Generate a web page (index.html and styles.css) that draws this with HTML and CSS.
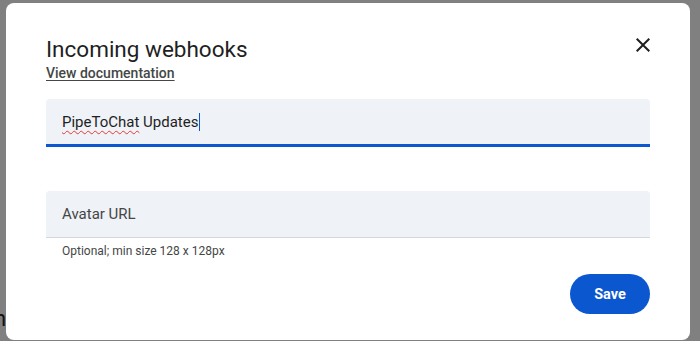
FILE: index.html
```html
<!DOCTYPE html>
<html lang="en">
<head>
	<meta charset="utf-8" />
	<title>Incoming webhooks</title>
	<link rel="stylesheet" href="styles.css">
</head>
<body>
	<div id="page">
		<p class="behind">h</p>
	</div>
	<div id="scrim">
		<div id="dialog">
			<div class="head">
				<div>
					<h1 class="title">Incoming webhooks</h1>
					<a class="docs" href="#">View documentation</a>
				</div>
				<button class="close" aria-label="Close">
					<svg viewBox="0 0 24 24" width="24" height="24"><path d="M19 6.41 17.59 5 12 10.59 6.41 5 5 6.41 10.59 12 5 17.59 6.41 19 12 13.41 17.59 19 19 17.59 13.41 12z" fill="currentColor"/></svg>
				</button>
			</div>
			<div class="field active">
				<span class="value"><span class="typo">PipeToChat</span> Updates</span><span class="caret"></span>
			</div>
			<div class="field">
				<span class="placeholder">Avatar URL</span>
			</div>
			<p class="hint">Optional; min size 128 x 128px</p>
			<div class="actions">
				<button class="save">Save</button>
			</div>
		</div>
	</div>
</body>
</html>
```

FILE: styles.css
```css
body {margin:0; padding:0; font-family:Roboto,"Noto Sans",sans-serif; color:#1f1f1f; background:#808080; overflow:hidden;}

#page {height:341px; display:flex; align-items:flex-end;}
.behind {margin:0 0 10px -6px; font-size:22px; color:#111;}

#scrim {position:fixed; inset:0; padding:3px 10px 0 6px;}

#dialog {height:337px; box-sizing:border-box; padding:32px 40px 0 40px; background:#fff; border-radius:8px;}

.head {display:flex; justify-content:space-between; align-items:flex-start;}
.title {margin:0; font-size:22.5px; font-weight:400; line-height:28px; color:#1f1f1f;}
.docs {display:inline-block; margin-top:1px; font-size:14px; font-weight:500; color:#444746; text-decoration:underline; text-underline-offset:2px;}
.close {margin:-2px -5px 0 0; padding:0; width:24px; height:24px; border:0; background:none; color:#1f1f1f;}

.field {display:flex; align-items:center; height:46px; padding:0 16px; background:#eff2f7; border-radius:4px 4px 0 0; border-bottom:1px solid #d3d6db; font-size:15px; color:#1f1f1f;}
.field.active {height:45px; margin-top:17px; border-bottom:3px solid #0b57d0; margin-bottom:44px;}
.value {padding-top:1px;}
.typo {text-decoration:underline wavy #e53935; text-decoration-thickness:1px; text-underline-offset:3px;}
.caret {display:inline-block; width:1px; height:18px; margin-left:1px; background:#0b57d0;}
.field .placeholder {color:#444746;}

.hint {margin:6px 0 0 16px; font-size:12px; color:#444746;}

.actions {display:flex; justify-content:flex-end; margin-top:16px;}
.save {width:80px; height:40px; border:0; border-radius:20px; background:#0b57d0; color:#fff; font-family:Roboto,sans-serif; font-size:14.5px; font-weight:700;}
```
